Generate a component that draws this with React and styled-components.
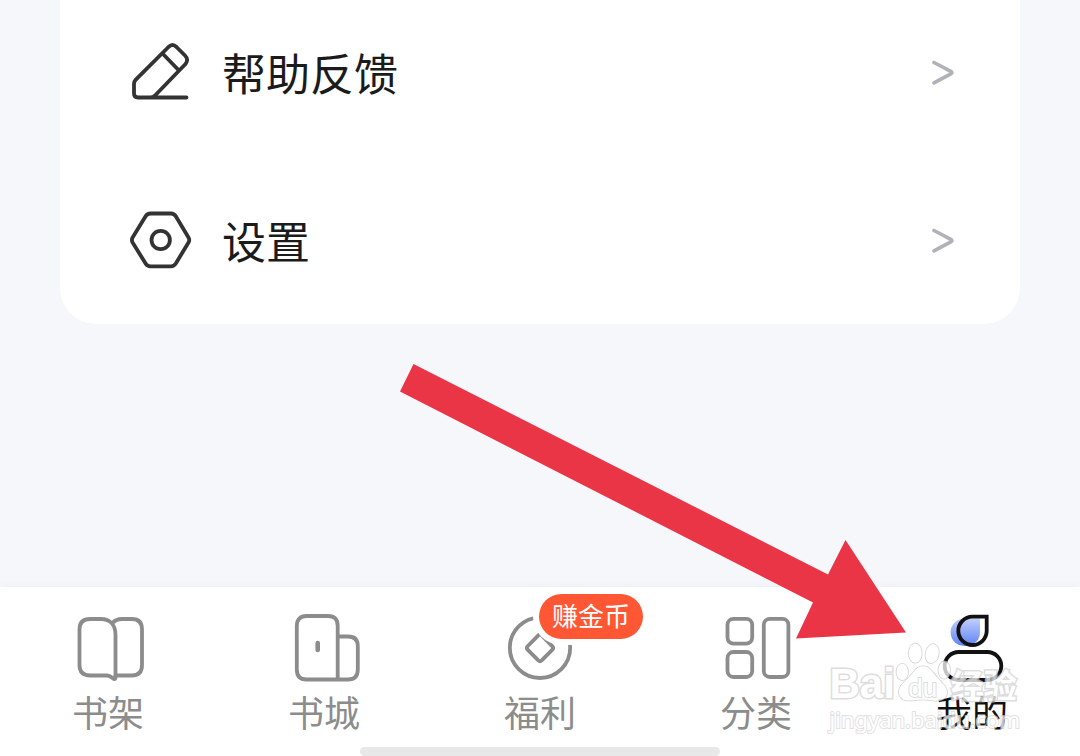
import React from 'react'
import styled, { createGlobalStyle } from 'styled-components'

const App = () => {
  return (
    <Page>
      <GlobalStyle />
      <Card>
        <MenuRow href="#feedback">
          <PencilIcon />
          <MenuText>帮助反馈</MenuText>
          <Chevron />
        </MenuRow>
        <MenuRow href="#settings">
          <SettingsIcon />
          <MenuText>设置</MenuText>
          <Chevron />
        </MenuRow>
      </Card>

      <Footer>
        <TabBar>
          <Tab href="#shelf">
            <TabIcon><ShelfIcon /></TabIcon>
            <TabLabel>书架</TabLabel>
          </Tab>
          <Tab href="#store">
            <TabIcon><StoreIcon /></TabIcon>
            <TabLabel>书城</TabLabel>
          </Tab>
          <Tab href="#welfare">
            <TabIcon>
              <CoinIcon />
              <Badge>赚金币</Badge>
            </TabIcon>
            <TabLabel>福利</TabLabel>
          </Tab>
          <Tab href="#category">
            <TabIcon><CategoryIcon /></TabIcon>
            <TabLabel>分类</TabLabel>
          </Tab>
          <Tab href="#mine" $active aria-current="page">
            <TabIcon><MineIcon /></TabIcon>
            <TabLabel>我的</TabLabel>
          </Tab>
        </TabBar>
        <HomeIndicator />
      </Footer>

      <Arrow viewBox="0 0 506 275" aria-hidden="true">
        <path d="M13.5 0 L428 210.5 L445.5 176 L506 268.5 L396 274.5 L413 238.5 L0 27.5 Z" />
      </Arrow>

      <Watermark>
        <WatermarkLogo>
          <Brand>Bai</Brand>
          <Paw>
            <PawIcon />
            <PawText>du</PawText>
          </Paw>
          <BrandCn>经验</BrandCn>
        </WatermarkLogo>
        <WatermarkUrl>jingyan.baidu.com</WatermarkUrl>
      </Watermark>
    </Page>
  )
}

const PencilIcon = () => (
  <MenuSvg viewBox="0 0 64 64">
    <path d="M58.5 56.5 H10 Q6 56.5 6 52.5 V43 Q6 40.5 7.8 38.7 L40.5 6 Q44.5 2.2 48.5 6 L57 14.5 Q61 18.5 57.5 23 L27.5 54 Q25 56.5 22 56.5" />
    <path d="M34.5 12.5 L50 28.5" />
  </MenuSvg>
)

const SettingsIcon = () => (
  <MenuSvg viewBox="0 0 64 64">
    <path d="M22.5 4.5 H43 Q46 4.5 47.8 7.2 L60.5 28.5 Q62 31 60.5 33.5 L47.8 54.5 Q46 57.3 43 57.3 H22.5 Q19.3 57.3 17.6 54.5 L4.6 33.5 Q3.2 31 4.6 28.5 L17.6 7.2 Q19.3 4.5 22.5 4.5 Z" />
    <circle cx="32.7" cy="31" r="9.2" />
  </MenuSvg>
)

const Chevron = () => (
  <ChevronSvg viewBox="0 0 22 26">
    <path d="M2 2.5 L18.8 11.4 Q21 12.7 18.8 13.9 L2 22.8" />
  </ChevronSvg>
)

const ShelfIcon = () => (
  <TabSvg viewBox="0 0 72 72">
    <path d="M43.5 65.5 V23 C43.5 13 38 7 29 7 H18 Q7.5 7 7.5 17.5 V53 Q7.5 63.5 18 63.5 H35 C39 63.5 40 66 42 67 Q43.5 67.5 43.5 65.5" />
    <path d="M40.5 11 Q44 7 50 7 H60 Q70 7 70 17.5 V53 Q70 63.5 60 63.5 H43.5" />
  </TabSvg>
)

const StoreIcon = () => (
  <TabSvg viewBox="0 0 72 72">
    <path d="M49.7 67.5 V14 Q49.7 4 40 4 H18.5 Q8.8 4 8.8 14 V57.5 Q8.8 67.5 18.5 67.5 H60 Q69.8 67.5 69.8 57.5 V34 Q69.8 24.5 60 24.5 H49.7" />
    <path d="M29.7 31 V38" strokeWidth="4.6" />
  </TabSvg>
)

const CoinIcon = () => (
  <TabSvg viewBox="0 0 72 72">
    <circle cx="36" cy="35.8" r="30.2" />
    <path d="M34.3 23.4 Q36 21.8 37.7 23.4 L48.4 34.3 Q50 36 48.4 37.7 L37.7 48.4 Q36 50 34.3 48.4 L23.6 37.7 Q22 36 23.6 34.3 Z" />
  </TabSvg>
)

const CategoryIcon = () => (
  <TabSvg viewBox="0 0 72 72">
    <rect x="7.5" y="6.9" width="24.7" height="24.7" rx="6" />
    <rect x="7.5" y="40" width="24.7" height="25" rx="6" />
    <rect x="43.8" y="6.9" width="24.6" height="58.1" rx="6" />
  </TabSvg>
)

const MineIcon = () => (
  <TabSvg viewBox="0 0 72 72">
    <defs>
      <linearGradient id="drop" x1="0" y1="0" x2="0" y2="1">
        <stop offset="0" stopColor="#c3cffb" />
        <stop offset="1" stopColor="#5c82f4" />
      </linearGradient>
    </defs>
    <path d="M44 6.5 H28 A13.8 13.8 0 1 0 30 34 Q44 32 44 20 Z" fill="url(#drop)" stroke="none" />
    <path d="M50.7 4.6 H36.4 A14.2 14.2 0 1 0 50.7 18.8 Z" strokeLinejoin="miter" />
    <rect x="8.7" y="40" width="56.6" height="28" rx="14" />
  </TabSvg>
)

const PawIcon = () => (
  <PawSvg viewBox="0 0 58 62">
    <ellipse cx="7.5" cy="31" rx="6" ry="8.5" />
    <ellipse cx="21" cy="11.5" rx="6.8" ry="10" />
    <ellipse cx="38.5" cy="12" rx="6.8" ry="10" transform="rotate(12 38.5 12)" />
    <ellipse cx="51" cy="29" rx="6" ry="9" />
    <path d="M29 25 C22 25 20 31 14 37 C8 43 3 47 4 53 C6 62 15 61 22 60 Q29 59 36 60 C45 62 53 60 54 53 C54 46 49 43 44 37 C38 30 36 25 29 25 Z" />
  </PawSvg>
)

const GlobalStyle = createGlobalStyle`
  body {
    margin: 0;
    background: #f5f7fb;
    font-family: "Noto Sans CJK SC", "Noto Sans", sans-serif;
  }
  a {
    text-decoration: none;
  }
`;
const Page = styled.div`
  position: relative;
  display: flex;
  flex-direction: column;
  justify-content: space-between;
  min-height: 100vh;
  overflow: hidden;
`;
const Card = styled.main`
  display: flex;
  flex-direction: column;
  gap: 100px;
  margin: 0 60px;
  padding: 39px 66px 49px 68px;
  background: #fff;
  border-radius: 0 0 36px 36px;
`;
const MenuRow = styled.a`
  display: flex;
  align-items: center;
  gap: 30px;
  height: 68px;
  color: #1b1b1b;
`;
const MenuText = styled.span`
  flex: 1;
  padding-bottom: 2px;
  font-size: 44px;
  line-height: 64px;
`;
const MenuSvg = styled.svg`
  width: 64px;
  height: 64px;
  fill: none;
  stroke: #333;
  stroke-width: 3.8;
  stroke-linecap: round;
  stroke-linejoin: round;
`;
const ChevronSvg = styled.svg`
  width: 22px;
  height: 26px;
  fill: none;
  stroke: #b0b2b7;
  stroke-width: 3.6;
  stroke-linecap: round;
`;
const Footer = styled.footer`
  display: flex;
  flex-direction: column;
  align-items: center;
  gap: 14px;
  padding-top: 25px;
  background: #fff;
  box-shadow: 0 -2px 8px rgba(0, 0, 0, 0.03);
`;
const TabBar = styled.nav`
  display: grid;
  grid-template-columns: repeat(5, 1fr);
  width: 100%;
`;
const Tab = styled.a`
  display: flex;
  flex-direction: column;
  align-items: center;
  gap: 5px;
  color: ${(props) => (props.$active ? '#111' : '#8c8c8c')};
`;
const TabIcon = styled.span`
  position: relative;
  width: 72px;
  height: 72px;
`;
const TabSvg = styled.svg`
  display: block;
  width: 100%;
  height: 100%;
  fill: none;
  stroke: currentColor;
  stroke-width: 3.8;
  stroke-linecap: round;
  stroke-linejoin: round;
`;
const TabLabel = styled.span`
  font-size: 36px;
  line-height: 44px;
`;
const Badge = styled.span`
  position: absolute;
  top: -18px;
  left: 35px;
  width: 104px;
  padding-bottom: 4px;
  border-radius: 23px;
  background: #ff5634;
  box-shadow: 0 0 0 6px #fff;
  color: #fff;
  font-size: 26px;
  line-height: 41px;
  text-align: center;
`;
const HomeIndicator = styled.div`
  width: 360px;
  height: 9px;
  border-radius: 5px;
  background: #e8e8e9;
`;
const Arrow = styled.svg`
  position: absolute;
  right: 174px;
  bottom: 117px;
  width: 506px;
  height: 275px;
  fill: #ea3546;
`;
const Watermark = styled.div`
  position: absolute;
  right: 60px;
  bottom: 24px;
  opacity: 0.75;
  color: #fff;
  pointer-events: none;
  paint-order: stroke fill;
  -webkit-text-stroke: 3px #d2d2d2;
`;
const WatermarkLogo = styled.div`
  display: flex;
  align-items: flex-end;
`;
const Brand = styled.span`
  font-family: "Liberation Sans", sans-serif;
  font-weight: bold;
  font-size: 42px;
  line-height: 44px;
`;
const BrandCn = styled.span`
  font-weight: bold;
  font-size: 33px;
  line-height: 44px;
`;
const Paw = styled.span`
  position: relative;
  width: 56px;
  height: 64px;
`;
const PawSvg = styled.svg`
  display: block;
  width: 100%;
  height: 60px;
  fill: #fff;
  stroke: #c4c4c4;
  stroke-width: 1.6;
`;
const PawText = styled.span`
  position: absolute;
  left: 0;
  right: 0;
  bottom: 4px;
  font-family: "Liberation Sans", sans-serif;
  font-size: 26px;
  line-height: 28px;
  text-align: center;
  -webkit-text-stroke: 2px #d2d2d2;
`;
const WatermarkUrl = styled.div`
  font-family: "Noto Sans", sans-serif;
  font-size: 22px;
  line-height: 26px;
  -webkit-text-stroke: 2px #d8d8d8;
`;

export default App;
